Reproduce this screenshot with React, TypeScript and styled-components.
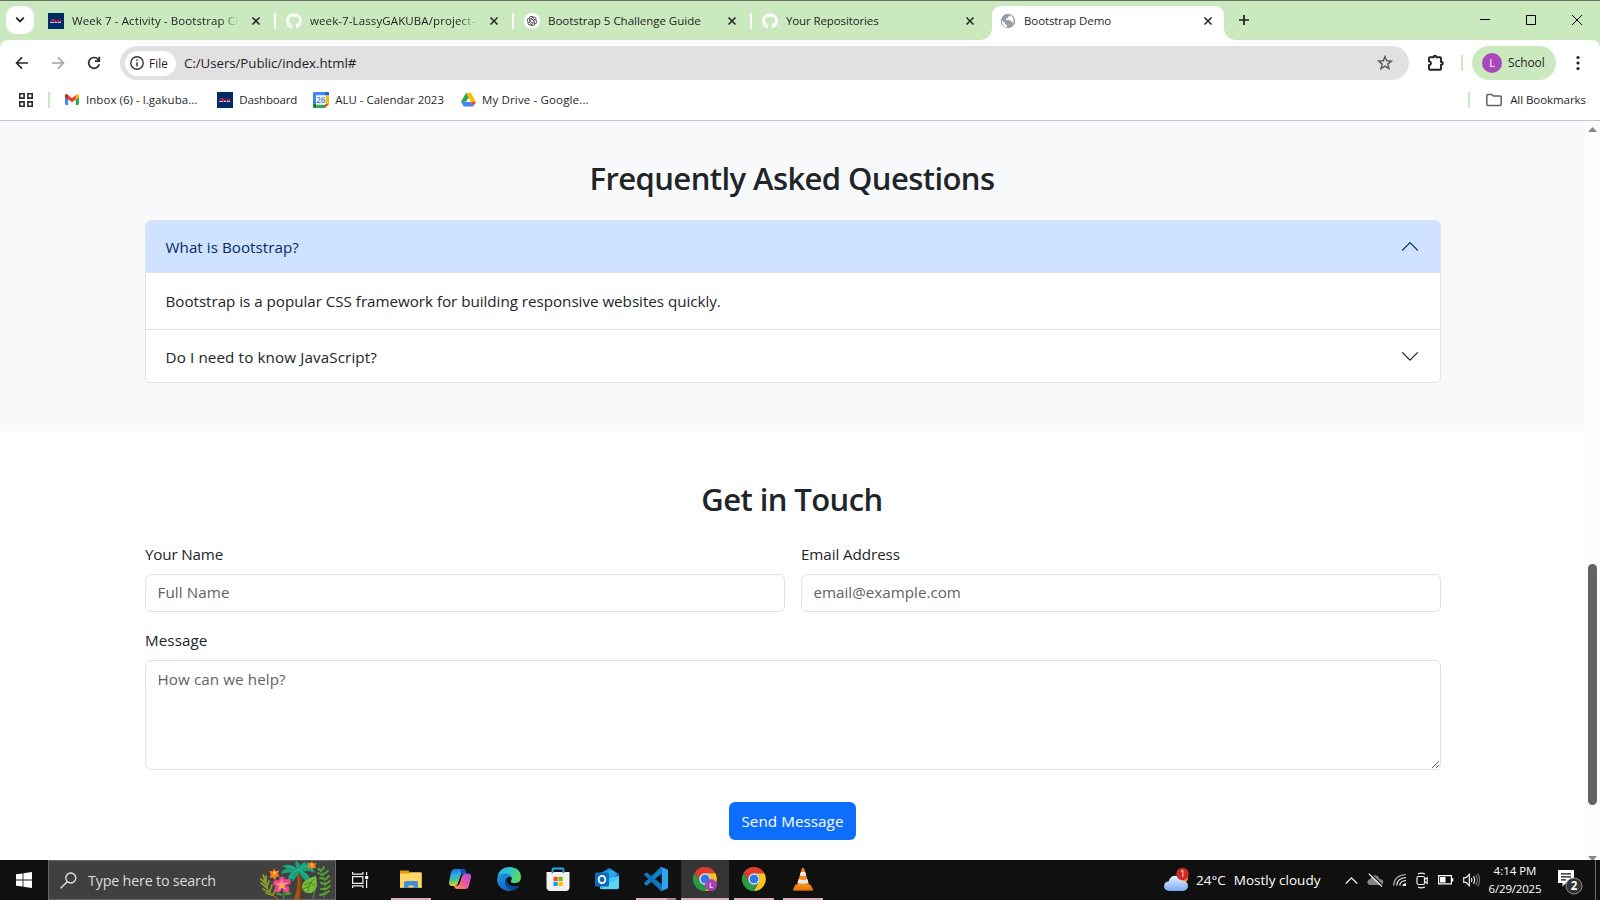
import React from "react";
import styled, { createGlobalStyle, css } from "styled-components";
import { FaGithub } from "react-icons/fa";
import { RiOpenaiFill } from "react-icons/ri";

const GlobalStyle = createGlobalStyle`
  * { box-sizing: border-box; }
  html, body { margin: 0; padding: 0; }
  body { font-family: "Open Sans", "Noto Sans", sans-serif; color: #212529; overflow: hidden; }
  svg { display: block; flex: none; }
`;

const Screen = styled.div`
  width: 1600px;
  height: 900px;
  display: flex;
  flex-direction: column;
  background: #fff;
  overflow: hidden;
`;

const Text = styled.span<{ $size: number; $track?: number; $color?: string; $weight?: number }>`
  font-size: ${(p) => p.$size}px;
  font-weight: ${(p) => p.$weight ?? 400};
  letter-spacing: ${(p) => p.$track ?? 0}px;
  color: ${(p) => p.$color ?? "#1f1f1f"};
  white-space: nowrap;
  line-height: 1.4;
`;

/* ---------- Tab strip ---------- */

const TabStrip = styled.div`
  height: 40px;
  flex: none;
  display: flex;
  align-items: flex-start;
  background: #cbe9bf;
  border-top: 1px solid #646f5f;
  padding: 5px 0 0 6px;
`;

const TabSearch = styled.div`
  width: 28px;
  height: 28px;
  border-radius: 10px;
  background: #fff;
  display: grid;
  place-items: center;
  margin-right: 6px;
`;

const Tab = styled.div<{ $active?: boolean }>`
  position: relative;
  width: ${(p) => (p.$active ? 232 : 238)}px;
  height: 34px;
  display: flex;
  align-items: center;
  padding: 0 ${(p) => (p.$active ? 10 : 2.5)}px 5px 8px;
  border-radius: 9px 9px 0 0;
  background: ${(p) => (p.$active ? "#fff" : "transparent")};
  ${(p) =>
    p.$active &&
    css`
      &::before,
      &::after {
        content: "";
        position: absolute;
        bottom: 0;
        width: 11px;
        height: 11px;
      }
      &::before {
        left: -11px;
        background: radial-gradient(circle at 0 0, transparent 10.5px, #fff 11px);
      }
      &::after {
        right: -11px;
        background: radial-gradient(circle at 100% 0, transparent 10.5px, #fff 11px);
      }
    `}
`;

const TabTitle = styled.div<{ $fade?: boolean }>`
  flex: 1;
  min-width: 0;
  margin: 0 9px 0 8px;
  padding-top: 1px;
  overflow: hidden;
  white-space: nowrap;
  display: flex;
  ${(p) => p.$fade && "mask-image: linear-gradient(90deg, #000 88%, transparent 99%);"}
`;

const TabDivider = styled.div<{ $clear?: boolean }>`
  width: 2px;
  height: 16px;
  background: ${(p) => (p.$clear ? "transparent" : "#fff")};
  margin-left: 12px;
`;

const NewTab = styled.div`
  padding: 8px 0 0 14px;
`;

const WindowButtons = styled.div`
  margin-left: auto;
  display: flex;
  gap: 34px;
  padding: 8px 17px 0 0;
`;

/* ---------- Toolbar ---------- */

const ToolbarBack = styled.div`
  background: linear-gradient(#cbe9bf 0 10px, #fff 10px);
  flex: none;
`;

const Toolbar = styled.div`
  height: 46px;
  display: flex;
  align-items: center;
  background: #fff;
  border-radius: 8px 8px 0 0;
  padding: 0 20px 0 14px;
`;

const NavButtons = styled.div`
  display: flex;
  gap: 20px;
  width: 106px;
`;

const AddressBar = styled.div`
  width: 1289px;
  height: 34px;
  border-radius: 17px;
  background: #e1e1e1;
  display: flex;
  align-items: center;
  padding: 0 16px 0 5px;
`;

const FileChip = styled.div`
  width: 51px;
  height: 25px;
  border-radius: 13px;
  background: #fff;
  display: flex;
  align-items: center;
  gap: 5px;
  padding-left: 5px;
  margin-right: 8px;
`;

const StarSlot = styled.div`
  margin-left: auto;
`;

const PuzzleSlot = styled.div`
  margin: 0 16px 0 17px;
`;

const GreenDivider = styled.div`
  width: 2px;
  height: 16px;
  background: #cbe9bf;
`;

const Profile = styled.div`
  width: 84px;
  height: 34px;
  border-radius: 17px;
  background: #cbe9bf;
  display: flex;
  align-items: center;
  gap: 6px;
  padding-left: 10px;
  margin: 0 auto 0 9px;
`;

const Avatar = styled.div`
  width: 20px;
  height: 20px;
  border-radius: 50%;
  background: #ab47bc;
  color: #fff;
  font-size: 11px;
  line-height: 20px;
  text-align: center;
`;

const BookmarkBar = styled.div`
  height: 35px;
  flex: none;
  display: flex;
  align-items: center;
  background: #fff;
  border-bottom: 1px solid #c9c9c9;
  padding: 0 14px 7px 19px;
`;

const Bookmark = styled.div<{ $gap: number; $left: number }>`
  display: flex;
  align-items: center;
  gap: ${(p) => p.$gap}px;
  margin-left: ${(p) => p.$left}px;
  ${Text} {
    padding-top: 1px;
  }
`;

const BookmarksRight = styled.div`
  margin-left: auto;
  display: flex;
  align-items: center;
`;

/* ---------- Page ---------- */

const Viewport = styled.div`
  height: 739px;
  flex: none;
  display: flex;
  overflow: hidden;
`;

const Page = styled.main`
  width: 1585px;
  height: 100%;
  overflow: hidden;
`;

const Faq = styled.section`
  height: 310px;
  background: #f8f9fa;
  padding: 38px 144px 0 145px;
`;

const Contact = styled.section`
  padding: 49px 144px 0 145px;
`;

const Heading = styled.h2`
  margin: 0;
  height: 38px;
  line-height: 38px;
  padding-right: 2px;
  text-align: center;
  font-size: 31px;
  font-weight: 600;
  letter-spacing: -0.58px;
  color: #212529;
`;

const Accordion = styled.div`
  margin-top: 23px;
  border: 1px solid #dee2e6;
  border-radius: 6px;
  overflow: hidden;
  background: #fff;
`;

const AccordionHeader = styled.div<{ $open?: boolean }>`
  height: ${(p) => (p.$open ? 52 : 53)}px;
  display: flex;
  align-items: center;
  justify-content: space-between;
  padding: 1px 20px 0 19.5px;
  background: ${(p) => (p.$open ? "#cfe2ff" : "#fff")};
  border-${(p) => (p.$open ? "bottom" : "top")}: 1px solid #dee2e6;
  ${Text} {
    padding-top: 2px;
  }
`;

const AccordionBody = styled.div`
  height: 56px;
  display: flex;
  align-items: center;
  padding: 1px 19.5px 0;
`;

const Form = styled.form`
  display: grid;
  grid-template-columns: 640px 640px;
  column-gap: 16px;
  margin-top: 24px;
`;

const Field = styled.div<{ $wide?: boolean }>`
  grid-column: ${(p) => (p.$wide ? "1 / -1" : "auto")};
  display: flex;
  flex-direction: column;
  height: ${(p) => (p.$wide ? 142 : 86)}px;
`;

const Label = styled.label<{ $track: number }>`
  height: 32px;
  line-height: 24px;
  font-size: 15.2px;
  letter-spacing: ${(p) => p.$track}px;
  color: #212529;
`;

const control = css<{ $track: number }>`
  font-family: inherit;
  font-size: 15.2px;
  letter-spacing: ${(p) => p.$track}px;
  line-height: 24px;
  border: 1px solid #dee2e6;
  border-radius: 6px;
  background: #fff;
  outline: none;
  margin: 0;
  width: 100%;
  &::placeholder {
    color: #5f6266;
    opacity: 1;
  }
`;

const Input = styled.input<{ $track: number }>`
  ${control}
  height: 38px;
  padding: 5px 11.5px 7px;
`;

const TextArea = styled.textarea<{ $track: number }>`
  ${control}
  height: 110px;
  padding: 6px 11.5px;
  resize: vertical;
`;

const SubmitRow = styled.div`
  grid-column: 1 / -1;
  display: flex;
  justify-content: center;
  padding: 32px 1px 0 0;
`;

const SubmitButton = styled.button`
  width: 127px;
  height: 38px;
  border: 0;
  border-radius: 6px;
  background: #0d6efd;
  color: #fff;
  font-family: inherit;
  font-size: 15.2px;
  letter-spacing: 0.06px;
  white-space: nowrap;
  padding: 0;
`;

const ScrollTrack = styled.div`
  width: 15px;
  height: 739px;
  background: #fcfcfc;
  display: flex;
  flex-direction: column;
  align-items: center;
  justify-content: space-between;
  padding: 6px 0 0;
`;

const ScrollThumb = styled.div`
  width: 9px;
  height: 241px;
  border-radius: 5px;
  background: #636363;
  margin-top: 381px;
`;

/* ---------- Taskbar ---------- */

const Taskbar = styled.footer`
  height: 40px;
  flex: none;
  display: flex;
  background: #101010;
`;

const StartButton = styled.div`
  width: 48px;
  display: grid;
  place-items: center;
`;

const SearchBox = styled.div`
  width: 288px;
  border: 1px solid #666;
  background: #404040;
  display: flex;
  align-items: center;
  padding-left: 11px;
`;

const SearchLabel = styled.div`
  width: 172px;
  margin-left: 11px;
  padding-top: 2px;
  display: flex;
`;

const TaskView = styled.div`
  width: 55px;
  display: flex;
  align-items: center;
  padding-left: 16px;
`;

const TaskButton = styled.div<{ $running?: boolean; $focused?: boolean; $stacked?: boolean }>`
  width: ${(p) => (p.$focused ? 48 : 40)}px;
  margin: 0 ${(p) => (p.$focused ? 5 : 9)}px 0 ${(p) => (p.$focused ? -4 : 0)}px;
  display: grid;
  place-items: center;
  background: ${(p) => (p.$focused ? "#353535" : "transparent")};
  border-bottom: 2px solid ${(p) => (p.$running ? "#dcb0b5" : "transparent")};
  ${(p) =>
    p.$stacked &&
    css`
      border-image: linear-gradient(90deg, #dcb0b5 31px, #a5868a 31px) 0 0 2 0;
    `}
`;

const Tray = styled.div`
  margin-left: auto;
  display: flex;
  align-items: center;
`;

const Weather = styled.div`
  display: flex;
  align-items: center;
  width: 181px;
`;

const TrayIcons = styled.div`
  display: flex;
  align-items: center;
  width: 143px;
  justify-content: space-between;
  padding-right: 8px;
`;

const Clock = styled.div`
  width: 54px;
  display: flex;
  flex-direction: column;
  align-items: center;
  gap: 2px;
`;

const Notifications = styled.div`
  width: 53px;
  padding: 4px 0 0 16px;
`;

const ShowDesktop = styled.div`
  width: 5px;
  height: 40px;
  border-left: 1px solid #6b6b6b;
`;

/* ---------- Icons ---------- */

const AluIcon = () => (
  <svg width="16" height="16" viewBox="0 0 16 16">
    <rect width="16" height="16" fill="#002b67" />
    <g fill="none">
      <path d="M2.6 8.6 4.700 6.500h.8v2.200M7 6.400v2.200h1.800M10 6.400v2.200h2.600V6.400" stroke="#d8274b" strokeWidth="1.100" />
      <path d="M2.200 9.500h3.600M6.600 9.500h2.500M9.900 9.500h3" stroke="#e9e4ef" strokeWidth=".9" />
    </g>
  </svg>
);

const CloseIcon = () => (
  <svg width="12" height="12" viewBox="0 0 12 12">
    <path d="m2.500 2.500 7 7m0-7-7 7" stroke="#2b2f2a" strokeWidth="1.700" />
  </svg>
);

const OpenAiBadge = styled.div`
  width: 16px;
  height: 16px;
  border-radius: 50%;
  background: #fff;
  display: grid;
  place-items: center;
  color: #222;
`;

const GlobeIcon = () => (
  <svg width="16" height="16" viewBox="0 0 16 16">
    <circle cx="8" cy="8" r="7.200" fill="#989ea5" />
    <path
      d="M2 7.200 5 9.900v1l2.100 1.500v1.900C4.200 14 2 11.500 2 8.200zM10 2c0 1-.5 1.500-1.700 1.600L8 5l-1.900.6v1.300h3.700l1 1.700h1.500c.8 1.200.1 2.200-.7 3.100 1.600-1.200 2.200-2.500 2.100-4.100C13.500 5 12 3 10 2z"
      fill="#fff"
    />
  </svg>
);

const BackIcon = ({ dim, flip }: { dim?: boolean; flip?: boolean }) => (
  <svg width="16" height="16" viewBox="0 0 16 16">
    <g transform={flip ? "translate(16 0) scale(-1 1)" : undefined}>
      <path d="M14 8H3M8 2.300 2.500 8 8 13.700" fill="none" stroke={dim ? "#a3a3a3" : "#2a2a2a"} strokeWidth="1.700" />
    </g>
  </svg>
);

const ReloadIcon = () => (
  <svg width="16" height="16" viewBox="0 0 16 16">
    <path d="M13.300 9.300A5.400 5.400 0 1 1 12 4.200l1.300 1.400" fill="none" stroke="#2a2a2a" strokeWidth="1.700" />
    <path d="M13.300 1.800v4.300H9" fill="none" stroke="#2a2a2a" strokeWidth="1.700" />
  </svg>
);

const InfoIcon = () => (
  <svg width="14" height="14" viewBox="0 0 14 14">
    <circle cx="7" cy="7" r="6.200" fill="none" stroke="#333" strokeWidth="1.400" />
    <path d="M7 6.200v4.200M7 3.500v1.500" stroke="#333" strokeWidth="1.500" />
  </svg>
);

const StarIcon = () => (
  <svg width="16" height="16" viewBox="0 0 16 16">
    <path
      d="m8 1.500 1.700 4.300 4.700.3-3.600 3 1.200 4.500L8 11.100l-4 2.500 1.200-4.500-3.600-3 4.700-.3z"
      fill="none"
      stroke="#5a5a5a"
      strokeWidth="1.400"
    />
  </svg>
);

const PuzzleIcon = () => (
  <svg width="19" height="18" viewBox="0 0 19 18">
    <path
      d="M3 4.200q0-1 1-1h3.600q.1-1.400 1.400-1.400t1.400 1.400h3.600q1 0 1 1v3.600q1.800.1 1.800 1.500T15 10.800v4q0 1-1 1H4q-1 0-1-1v-3.600q2-.4 2-2t-2-2z"
      fill="none"
      stroke="#222"
      strokeWidth="1.900"
    />
  </svg>
);

const DotsIcon = () => (
  <svg width="4" height="16" viewBox="0 0 4 16" fill="#222">
    <circle cx="2" cy="2.500" r="1.600" />
    <circle cx="2" cy="8" r="1.600" />
    <circle cx="2" cy="13.500" r="1.600" />
  </svg>
);

const GridIcon = () => (
  <svg width="14" height="14" viewBox="0 0 14 14" fill="none" stroke="#2a2a2a" strokeWidth="1.600">
    <path d="M.8.8h4.300v4.300H.8zM8.900.8h4.300v4.300H8.900zM.8 8.900h4.300v4.300H.8zM8.900 8.900h4.300v4.300H8.900z" />
  </svg>
);

const GmailIcon = () => (
  <svg width="14" height="11" viewBox="0 0 14 11">
    <path d="M0 2.500 3.200 4.800V11H1Q0 11 0 10z" fill="#4285f4" />
    <path d="M14 2.500 10.800 4.800V11H13q1 0 1-1z" fill="#34a853" />
    <path d="m10.800 1 .7-.6Q14-.6 14 2v1l-3.200 2.400z" fill="#fbbc04" />
    <path d="M3.200 1 7 3.900 10.800 1v4.400L7 8.200 3.200 5.400z" fill="#ea4335" />
    <path d="M3.200 1 2.500.4Q0-.6 0 2v1l3.200 2.400z" fill="#c5221f" />
  </svg>
);

const CalendarIcon = () => (
  <svg width="16" height="16" viewBox="0 0 16 16">
    <path d="M0 1q0-1 1-1h11v3.500H3.500V12H0z" fill="#4285f4" />
    <path d="M12 0h3q1 0 1 1v2.500h-4z" fill="#1967d2" />
    <path d="M12.500 3.500H16V12h-3.500z" fill="#fbbc04" />
    <path d="M3.500 12.500H12V16H3.500z" fill="#34a853" />
    <path d="M0 12h3.500v4H1q-1 0-1-1z" fill="#188038" />
    <path d="M12 12h4l-4 4z" fill="#ea4335" />
    <path d="M3 3.500h9.500v9H3z" fill="#fff" />
    <text x="7.800" y="11" fontSize="8" fontWeight="600" fill="#2f76e8" textAnchor="middle" fontFamily="Open Sans">
      26
    </text>
  </svg>
);

const DriveIcon = () => (
  <svg width="15" height="14" viewBox="0 0 15 14">
    <path d="M5 0h2.500L10 4.500 5 8.700.3 8.900 0 8.500z" fill="#34a853" />
    <path d="M5 0h5l5 8.900h-5z" fill="#fbbc04" />
    <path d="M0 9h5L2.800 13.600z" fill="#4285f4" />
    <path d="M10 9h5l-2.700 4.600z" fill="#ea4335" />
    <path d="M7.500 4.700 10 9H5z" fill="#fff" />
    <path d="M4.500 9H10l2.300 4.600H2.700z" fill="#4285f4" />
  </svg>
);

const FolderIcon = () => (
  <svg width="16" height="14" viewBox="0 0 16 14">
    <path
      d="M.8 2.500q0-1 1-1h4l1.600 1.600h6.800q1 0 1 1v7.400q0 1-1 1H1.800q-1 0-1-1z"
      fill="none"
      stroke="#5f5f5f"
      strokeWidth="1.500"
    />
  </svg>
);

const AccordionChevron = ({ open }: { open?: boolean }) => (
  <svg width="20" height="20" viewBox="0 0 16 16">
    <path
      d={open ? "m2 10.500 6-6 6 6" : "m2 4.500 6 6 6-6"}
      fill="none"
      stroke={open ? "#052c65" : "#212529"}
      strokeWidth="1.050"
      strokeLinecap="round"
      strokeLinejoin="round"
    />
  </svg>
);

const WindowsLogo = () => (
  <svg width="16" height="16" viewBox="0 0 16 16" fill="#fff">
    <path d="M0 2.300 6.600 1.400v6.200H0zM7.400 1.300 16 0v7.600H7.400zM0 8.400h6.600v6.200L0 13.700zM7.400 8.400H16V16l-8.600-1.200z" />
  </svg>
);

const SearchIcon = () => (
  <svg width="17" height="17" viewBox="0 0 17 17" fill="none" stroke="#e8e8e8" strokeWidth="1.300">
    <circle cx="10.800" cy="6" r="5" />
    <path d="M7.200 9.700.7 16.200" />
  </svg>
);

const PlantsArt = () => (
  <svg width="74" height="38" viewBox="0 0 74 38">
    <path d="M4 15q0 14 14 23" fill="none" stroke="#7d6a1e" strokeWidth="1.500" />
    <path
      d="M3 14l2 5M1 18l5 5M1 22l6 5M3 28l6 3M6 32l6 2M6 15l0 6M9 20l-2 6M12 24l-2 6M15 29l-2 5"
      stroke="#8a9a2c"
      strokeWidth="1.800"
      strokeLinecap="round"
    />
    <path d="M34 38q5-12 3-25h3q3 12 0 25z" fill="#a8550c" />
    <path d="M39 13q2 10 0 25h2q1-14-1-25z" fill="#7b3c08" />
    <g fill="#17a17c">
      <path d="M38 10q-6-9-16-5 4 1 5 3-5 0-6 5 8-3 16 0z" />
      <path d="M38 10q4-10 15-7-4 2-4 3 5 1 6 6-7-4-16 0z" />
      <path d="M38 9q-4-5-2-9 4 2 4 5 2-4 6-4-2 6-6 9z" />
      <path d="M39 9q-12 1-11 12 2-3 4-3l0 3q4-4 8-11z" />
      <path d="M38 9q12 2 13 12-2-3-4-3l0 3Q41 17 38 9z" />
    </g>
    <path d="M38 9Q32 4 26 6M38 9q6-5 11-4M38 9q-7 2-8 8M39 9q7 3 9 8" fill="none" stroke="#2fb98d" strokeWidth="1" />
    <path d="M23 26q2 8 0 12" fill="none" stroke="#3d8b2c" strokeWidth="1.500" />
    <path d="M15 32q5-1 8 2-4 2-8-2zM24 33q4-4 8-1-4 4-8 1z" fill="#4b9a2f" />
    <g fill="#ee4488">
      <ellipse cx="22" cy="19.500" rx="3" ry="4" />
      <ellipse cx="17" cy="22" rx="4" ry="3" />
      <ellipse cx="27" cy="21" rx="4" ry="3" />
      <ellipse cx="18" cy="28" rx="3.300" ry="3.500" />
      <ellipse cx="26" cy="28" rx="3.300" ry="3.500" />
    </g>
    <path d="m22 17 1 5 6-1-5 4 3 4-5-2-4 3 1-5-4-3 5 0z" fill="#f887b0" />
    <circle cx="22" cy="24.500" r="2.500" fill="#f8b32f" />
    <path d="M53 38q1-8 4-15" fill="none" stroke="#3d8b2c" strokeWidth="1.500" />
    <path d="M56 15q-15 4-14 12 2 6 9 5 8-3 5-17z" fill="#79ba3b" />
    <path d="M54 18q-6 5-6 13M52 21l-8 3M50 25l-7 3M51 22l4 3" fill="none" stroke="#3d8b2c" strokeWidth="1" />
    <path d="M59 6q9 14 5 31" fill="none" stroke="#3d8b2c" strokeWidth="1.200" />
    <path
      d="M61 10l-3-2M62 14l-4-2M64 18l-4-1M65 23l-4-1M65 28l-4 0M64 33l-4 1M62 9l2-3M64 13l4-3M66 18l3-3M66 23l4-3M66 28l4-3M65 33l4-3"
      stroke="#55a532"
      strokeWidth="1.900"
      strokeLinecap="round"
    />
    <path
      d="m14 7 1.500 3.200 3.800-1-1.500 3.300 2 3-3.500.3-1 3.500-2.500-2.800-3.600.3 1.600-3L9.300 10l3.500.2z"
      fill="#f58220"
    />
    <circle cx="14.500" cy="12" r="1.400" fill="#ffc15a" />
    <path d="m52 0 1.300 2.500 3.200-.4-1.300 2.500 1.200 2.700-3-.2L51.500 9l-1.300-2.500-3 .2 1.300-2.500-1-2.600 3 .4z" fill="#f58220" />
    <circle cx="52" cy="4" r="1.200" fill="#ffc15a" />
  </svg>
);

const TaskViewIcon = () => (
  <svg width="17" height="17" viewBox="0 0 17 17" fill="none" stroke="#f0f0f0" strokeWidth="1.200">
    <path d="M.6 4.600h10.300v6.800H.6zM.6 0v2.200h10.300V0M.6 16v-2.200h10.300V16M14.600 0v3.200M14.600 7.500V16" />
    <path d="M13.200 4h3v3h-3z" fill="#fff" stroke="none" />
  </svg>
);

const ExplorerIcon = () => (
  <svg width="24" height="24" viewBox="0 0 24 24">
    <path d="M1 3.500h8.500l1.500 2V9H1z" fill="#e0980c" />
    <path d="M1 6.500h9l1.500-1.300H22q.8 0 .8.800v14q0 .8-.8.800H1z" fill="#ffd664" />
    <path d="M5 21v-5.300q0-1.700 1.700-1.700h10.600q1.700 0 1.700 1.700V21h-4.500v-2.500h-5V21z" fill="#3f8fd8" />
    <path d="M1 20h4v1H1zM19 20h3.800v1H19z" fill="#f0b93a" />
  </svg>
);

const CopilotIcon = () => (
  <svg width="24" height="24" viewBox="0 0 24 24">
    <defs>
      <linearGradient id="cpA" x1="0" y1="0" x2="0.200" y2="1">
        <stop offset="0" stopColor="#1764d8" />
        <stop offset=".4" stopColor="#28aee8" />
        <stop offset=".7" stopColor="#4dc28a" />
        <stop offset="1" stopColor="#f4cf1d" />
      </linearGradient>
      <linearGradient id="cpB" x1="1" y1="0" x2="0" y2="1">
        <stop offset="0" stopColor="#a44be8" />
        <stop offset=".5" stopColor="#f0569a" />
        <stop offset="1" stopColor="#fb9a4b" />
      </linearGradient>
    </defs>
    <path
      d="M6.500 2H15q2 0 2.600 2l.7 2.500h-3q-2 0-2.700 2L10 16q-1 3-3.500 3H4q-3.500 0-3-4L3 5.500Q3.700 2 6.500 2z"
      fill="url(#cpA)"
    />
    <path
      d="M17.500 22H9q-2 0-2.600-2l-.4-1.300h2.800q2 0 2.700-2L14 9q1-2.500 3.500-2.500H20q3.500 0 3 4L21 18.500q-.7 3.500-3.500 3.500z"
      fill="url(#cpB)"
    />
    <path d="M12.500 2H15q2 0 2.600 2l.7 2.500h-3q-1.500 0-2.300 1.200z" fill="#1b50b8" />
  </svg>
);

const EdgeIcon = () => (
  <svg width="24" height="24" viewBox="0 0 24 24">
    <defs>
      <linearGradient id="edA" x1="0" y1="0.300" x2="1" y2="0.500">
        <stop offset="0" stopColor="#2ab3ee" />
        <stop offset=".5" stopColor="#30c6c8" />
        <stop offset="1" stopColor="#5fdc52" />
      </linearGradient>
      <linearGradient id="edB" x1="0" y1="0" x2="0.500" y2="1">
        <stop offset="0" stopColor="#1e9be6" />
        <stop offset="1" stopColor="#1464c4" />
      </linearGradient>
    </defs>
    <path
      d="M.3 10.500Q2 0 12.500 0 24 .8 24 10.500q-.3 5.500-6.300 5.600-4.500 0-3.800-2.100 1.800-2.300-.2-4.700Q11 6.800 6.500 7.300 2 8 .3 10.500z"
      fill="url(#edA)"
    />
    <path
      d="M.2 11.500Q2 6 8 6.200q4.500.3 6.200 3.800-2.700-1-4.700 1.500-1.700 2.800-.5 6.500 1.300 4 5.500 5.700Q8.500 25 4 21-.5 17 .2 11.500z"
      fill="url(#edB)"
    />
    <path
      d="M9.200 12Q7 14.500 8.500 18.500q2 4.500 6.500 5.200 4.500-.8 7.300-4.700.5-1-.6-.6-4.500 2-8.700-.2Q9.500 16 9.200 12z"
      fill="#0d4a94"
    />
  </svg>
);

const StoreIcon = () => (
  <svg width="24" height="24" viewBox="0 0 24 24">
    <path d="M6.500 6V2.500q0-1 1-1h9q1 0 1 1V6" fill="none" stroke="#28a8ea" strokeWidth="1.800" />
    <path d="M.5 5h23V20q0 4-4 4h-15q-4 0-4-4z" fill="#f1f1f1" />
    <path d="M6.500 4.500V6M17.500 4.500V6" stroke="#1c7fc0" strokeWidth="1.800" />
    <path d="M7.500 9.800h4.200V14H7.500z" fill="#f25022" />
    <path d="M12.500 9.800h4.200V14h-4.200z" fill="#7fba00" />
    <path d="M7.500 14.800h4.200V19H7.500z" fill="#00a4ef" />
    <path d="M12.500 14.800h4.200V19h-4.200z" fill="#ffb900" />
  </svg>
);

const OutlookIcon = () => (
  <svg width="24" height="24" viewBox="0 0 24 24">
    <path d="M4 7.500 13.500 1.300q.8-.5 1.600 0L24 7v5H4z" fill="#1a7fd0" />
    <path d="M6 5.500 17 3l5 4-8 8-8-3z" fill="#28a8e8" />
    <path d="M14 13 24 7v7l-6 2z" fill="#0f4f96" />
    <path d="M5 21.500V14l19-5.500V20q0 2-2 2H7q-2 0-2-.5z" fill="#42c4f4" />
    <path d="M5 22 24 11v9.500q0 1.700-2 1.700H7z" fill="#6fdcf9" opacity=".6" />
    <rect y="5.500" width="14" height="14" rx="1.500" fill="#0f6cbd" />
    <ellipse cx="7" cy="12.500" rx="3.300" ry="3.700" fill="none" stroke="#fff" strokeWidth="1.800" />
  </svg>
);

const VsCodeIcon = () => (
  <svg width="24" height="24" viewBox="0 0 24 24">
    <path d="M17.800 0v6.500L3.200 18.300q-.7.500-1.400 0L.4 17q-.6-.7 0-1.300L16.500.6z" fill="#1080cc" />
    <path d="M17.800 24v-6.500L3.200 5.700q-.7-.5-1.400 0L.4 7q-.6.700 0 1.300l16.100 15.100z" fill="#0f75bd" />
    <path
      d="M17.500 0 24 2.800v18.400L17.500 24q-1 0-1.200-.8 1.500.3 1.500-1.200V2q0-1.500-1.500-1.200.2-.8 1.200-.8z"
      fill="#2fa3ee"
    />
  </svg>
);

const ChromeIcon = ({ badge }: { badge?: boolean }) => (
  <svg width="24" height="24" viewBox="0 0 48 48">
    <path d="M3.200 12 14.500 29.500A11 11 0 0 1 24 12.500h20.800A24 24 0 0 0 3.200 12z" fill="#e33b2e" />
    <path d="M44.800 12.500H24a11 11 0 0 1 9.500 17L24 48a24 24 0 0 0 20.800-35.500z" fill="#fcc31e" />
    <path d="M24 48 33.500 29.500a11 11 0 0 1-19 0L3.200 12A24 24 0 0 0 24 48z" fill="#2a9a47" />
    <circle cx="24" cy="24" r="11.500" fill="#fff" />
    <circle cx="24" cy="24" r="9" fill="#2f78ec" />
    {badge && (
      <>
        <circle cx="36" cy="36" r="12" fill="#a644b8" />
        <text x="36" y="41" fontSize="13" fontWeight="600" fill="#fff" textAnchor="middle">
          L
        </text>
      </>
    )}
  </svg>
);

const VlcIcon = () => (
  <svg width="24" height="24" viewBox="0 0 24 24">
    <path d="m4.500 17.500-2.500 5q-.3 1 .7 1h18.600q1 0 .7-1l-2.500-5z" fill="#f0800f" />
    <path d="M2 22.500h20l.2 1H2z" fill="#c95f05" />
    <path d="M10.900 1.500q1.100-1.500 2.200 0L18.300 18.500q-6.300 3.500-12.600 0z" fill="#f48a1a" />
    <path d="M9.800 5h4.400l1 3.500q-3.200 1.200-6.400 0zM7.700 12q4.300 1.800 8.600 0l1.100 3.700q-5.400 2.300-10.800 0z" fill="#e6e8ea" />
  </svg>
);

const WeatherIcon = () => (
  <svg width="26" height="26" viewBox="0 0 26 26">
    <defs>
      <linearGradient id="cloud" x1="0" y1="0" x2="0" y2="1">
        <stop offset="0" stopColor="#e8f2ff" />
        <stop offset="1" stopColor="#7eaaf0" />
      </linearGradient>
    </defs>
    <circle cx="19.500" cy="11" r="4.500" fill="#f59a23" />
    <path
      d="M5.500 24Q0 23.500 0 19q.3-4 4.700-4.700Q6 8.700 11.500 8.700q5 .3 6.500 5 6 .3 6 5.300-.5 4.700-5 5z"
      fill="url(#cloud)"
    />
    <circle cx="18.500" cy="7" r="6.200" fill="#cf2a20" />
    <text x="18.500" y="10.200" fontSize="9" fill="#fff" textAnchor="middle">
      1
    </text>
  </svg>
);

const ChevronUpIcon = () => (
  <svg width="13" height="9" viewBox="0 0 13 9">
    <path d="m.8 7.500 5.700-5.700 5.700 5.700" fill="none" stroke="#f0f0f0" strokeWidth="1.300" />
  </svg>
);

const CloudOffIcon = () => (
  <svg width="17" height="14" viewBox="0 0 17 14">
    <path d="M3.500 12Q.3 11.800.3 9q.2-2.600 2.900-2.800Q4.500 2.200 8 2.300q3.600.2 4.300 3.700 4 .3 4 3.200-.2 2.600-3 2.800z" fill="#858585" />
    <path d="m2.800.2 13 12.500" stroke="#101010" strokeWidth="1.500" />
    <path d="m1.800.8 13.200 12.700" stroke="#eee" strokeWidth="1.200" />
  </svg>
);

const WifiIcon = () => (
  <svg width="14" height="14" viewBox="0 0 14 14" fill="none" strokeWidth="1.200">
    <path d="M.7 12.500Q1 2.500 13 1.500" stroke="#b5b5b5" />
    <path d="M3.700 12.500Q4 5.300 13 4.500M6.700 12.500Q7 8 13 7.500" stroke="#eee" />
    <path d="M9.500 13q0-2.500 3.500-2.700V13z" fill="#eee" />
  </svg>
);

const MeetIcon = () => (
  <svg width="13" height="17" viewBox="0 0 13 17" fill="none" stroke="#eee" strokeWidth="1.200">
    <rect x="1" y="4.500" width="7.500" height="8" rx="1.500" />
    <path d="m8.500 7.500 2.700-1.800v5.600L8.500 9.500M2 2q3-1.700 7 0M2 15q3 1.700 7 0" />
  </svg>
);

const BatteryIcon = () => (
  <svg width="16" height="10" viewBox="0 0 16 10">
    <path d="M.6.600h12.800v8.300H.6z" fill="none" stroke="#fff" strokeWidth="1.200" />
    <path d="M2 2h5.500v5.500H2zM14 3h1.300v3.500H14z" fill="#fff" />
  </svg>
);

const SpeakerIcon = () => (
  <svg width="17" height="14" viewBox="0 0 17 14" fill="none" strokeWidth="1.200">
    <path d="M.7 4.700h2.200L6.300 1.500v11L2.900 9.300H.7z" stroke="#eee" />
    <path d="M8.300 5q1.300 2 0 4M10.500 3.300q2.300 3.700 0 7.400" stroke="#eee" />
    <path d="M12.700 1.800q3.400 5.200 0 10.400M14.700.5q3.800 6.500 0 13" stroke="#6f6f6f" />
  </svg>
);

const NotificationIcon = () => (
  <svg width="26" height="26" viewBox="0 0 26 26">
    <path d="M0 1h16v13H8l-3.500 3.500V14H0z" fill="#fff" />
    <path d="M3 4.800h10M3 7.800h10M3 10.800h5" stroke="#101010" strokeWidth="1.200" />
    <circle cx="16" cy="17" r="8" fill="#343434" stroke="#8d8d8d" strokeWidth="1" />
    <text x="16" y="21" fontSize="11.500" fontWeight="700" fill="#fff" textAnchor="middle">
      2
    </text>
  </svg>
);

/* ---------- Screen content ---------- */

const tabs = [
  { icon: <AluIcon />, title: "Week 7 - Activity - Bootstrap Ch", track: 0.1, fade: true },
  { icon: <FaGithub size={16} color="#fff" />, title: "week-7-LassyGAKUBA/project-c", track: 0.11, fade: true },
  {
    icon: (
      <OpenAiBadge>
        <RiOpenaiFill size={12} />
      </OpenAiBadge>
    ),
    title: "Bootstrap 5 Challenge Guide",
    track: -0.02,
  },
  { icon: <FaGithub size={16} color="#fff" />, title: "Your Repositories", track: -0.12, last: true },
];

export default function App() {
  return (
    <>
      <GlobalStyle />
      <Screen>
        <TabStrip>
          <TabSearch>
            <svg width="10" height="8" viewBox="0 0 10 8">
              <path d="m1.200 1.700 3.800 3.800 3.800-3.800" fill="none" stroke="#1f1f1f" strokeWidth="1.800" />
            </svg>
          </TabSearch>
          {tabs.map((tab, i) => (
            <Tab key={i}>
              {tab.icon}
              <TabTitle $fade={tab.fade}>
                <Text $size={11.5} $track={tab.track}>
                  {tab.title}
                </Text>
              </TabTitle>
              <CloseIcon />
              <TabDivider $clear={tab.last} />
            </Tab>
          ))}
          <Tab $active>
            <GlobeIcon />
            <TabTitle>
              <Text $size={11.5} $track={-0.1}>
                Bootstrap Demo
              </Text>
            </TabTitle>
            <CloseIcon />
          </Tab>
          <NewTab>
            <svg width="12" height="12" viewBox="0 0 12 12">
              <path d="M6 1v10M1 6h10" stroke="#1f1f1f" strokeWidth="1.700" />
            </svg>
          </NewTab>
          <WindowButtons>
            <svg width="12" height="12" viewBox="0 0 12 12">
              <path d="M1 5.500h10" stroke="#000" />
            </svg>
            <svg width="12" height="12" viewBox="0 0 12 12">
              <path d="M1.500 1.500h9v9h-9z" fill="none" stroke="#000" />
            </svg>
            <svg width="12" height="12" viewBox="0 0 12 12">
              <path d="m1 1 10 10M11 1 1 11" stroke="#000" />
            </svg>
          </WindowButtons>
        </TabStrip>

        <ToolbarBack>
          <Toolbar>
            <NavButtons>
              <BackIcon />
              <BackIcon dim flip />
              <ReloadIcon />
            </NavButtons>
            <AddressBar>
              <FileChip>
                <InfoIcon />
                <Text $size={11.7} $track={0.1} $weight={500}>
                  File
                </Text>
              </FileChip>
              <Text $size={13.3} $track={-0.06}>
                C:/Users/Public/index.html#
              </Text>
              <StarSlot>
                <StarIcon />
              </StarSlot>
            </AddressBar>
            <PuzzleSlot>
              <PuzzleIcon />
            </PuzzleSlot>
            <GreenDivider />
            <Profile>
              <Avatar>L</Avatar>
              <Text $size={12} $track={-0.1}>
                School
              </Text>
            </Profile>
            <DotsIcon />
          </Toolbar>
        </ToolbarBack>

        <BookmarkBar>
          <GridIcon />
          <Bookmark $gap={15} $left={15}>
            <GreenDivider />
            <GmailIcon />
          </Bookmark>
          <Bookmark $gap={0} $left={7}>
            <Text $size={11.5} $track={0.04}>
              Inbox (6) - l.gakuba...
            </Text>
          </Bookmark>
          <Bookmark $gap={6} $left={20}>
            <AluIcon />
            <Text $size={11.5} $track={-0.17}>
              Dashboard
            </Text>
          </Bookmark>
          <Bookmark $gap={6} $left={16}>
            <CalendarIcon />
            <Text $size={11.5}>ALU - Calendar 2023</Text>
          </Bookmark>
          <Bookmark $gap={6} $left={17}>
            <DriveIcon />
            <Text $size={11.5} $track={0.15}>
              My Drive - Google...
            </Text>
          </Bookmark>
          <BookmarksRight>
            <GreenDivider />
            <Bookmark $gap={8} $left={16}>
              <FolderIcon />
              <Text $size={11.5} $track={-0.06}>
                All Bookmarks
              </Text>
            </Bookmark>
          </BookmarksRight>
        </BookmarkBar>

        <Viewport>
          <Page>
            <Faq>
              <Heading>Frequently Asked Questions</Heading>
              <Accordion>
                <AccordionHeader $open>
                  <Text $size={15.2} $track={0.03} $color="#052c65">
                    What is Bootstrap?
                  </Text>
                  <AccordionChevron open />
                </AccordionHeader>
                <AccordionBody>
                  <Text $size={15.2} $track={-0.028} $color="#212529">
                    Bootstrap is a popular CSS framework for building responsive websites quickly.
                  </Text>
                </AccordionBody>
                <AccordionHeader>
                  <Text $size={15.2} $track={0.12} $color="#212529">
                    Do I need to know JavaScript?
                  </Text>
                  <AccordionChevron />
                </AccordionHeader>
              </Accordion>
            </Faq>
            <Contact>
              <Heading>Get in Touch</Heading>
              <Form>
                <Field>
                  <Label $track={-0.17}>Your Name</Label>
                  <Input $track={0.1} placeholder="Full Name" />
                </Field>
                <Field>
                  <Label $track={-0.08}>Email Address</Label>
                  <Input $track={0} placeholder="email@example.com" />
                </Field>
                <Field $wide>
                  <Label $track={0.08}>Message</Label>
                  <TextArea $track={0.09} placeholder="How can we help?" />
                </Field>
                <SubmitRow>
                  <SubmitButton type="button">Send Message</SubmitButton>
                </SubmitRow>
              </Form>
            </Contact>
          </Page>
          <ScrollTrack>
            <svg width="9" height="5" viewBox="0 0 9 5">
              <path d="M0 5 4.500 0 9 5z" fill="#858585" />
            </svg>
            <ScrollThumb />
            <svg width="9" height="4" viewBox="0 0 9 4">
              <path d="M0 0h9L4.500 5z" fill="#858585" />
            </svg>
          </ScrollTrack>
        </Viewport>

        <Taskbar>
          <StartButton>
            <WindowsLogo />
          </StartButton>
          <SearchBox>
            <SearchIcon />
            <SearchLabel>
              <Text $size={14.3} $track={-0.19} $color="#dcdcdc">
                Type here to search
              </Text>
            </SearchLabel>
            <PlantsArt />
          </SearchBox>
          <TaskView>
            <TaskViewIcon />
          </TaskView>
          <TaskButton $running>
            <ExplorerIcon />
          </TaskButton>
          <TaskButton>
            <CopilotIcon />
          </TaskButton>
          <TaskButton>
            <EdgeIcon />
          </TaskButton>
          <TaskButton>
            <StoreIcon />
          </TaskButton>
          <TaskButton>
            <OutlookIcon />
          </TaskButton>
          <TaskButton $running $stacked>
            <VsCodeIcon />
          </TaskButton>
          <TaskButton $running $focused>
            <ChromeIcon badge />
          </TaskButton>
          <TaskButton $running>
            <ChromeIcon />
          </TaskButton>
          <TaskButton $running>
            <VlcIcon />
          </TaskButton>
          <Tray>
            <Weather>
              <WeatherIcon />
              <Bookmark $gap={8} $left={6}>
                <Text $size={13.5} $color="#fff">
                  24°C
                </Text>
                <Text $size={13.5} $track={0.02} $color="#fff">
                  Mostly cloudy
                </Text>
              </Bookmark>
            </Weather>
            <TrayIcons>
              <ChevronUpIcon />
              <CloudOffIcon />
              <WifiIcon />
              <MeetIcon />
              <BatteryIcon />
              <SpeakerIcon />
            </TrayIcons>
            <Clock>
              <Text $size={11.5} $track={-0.03} $color="#fff">
                4:14 PM
              </Text>
              <Text $size={11.5} $track={-0.185} $color="#fff">
                6/29/2025
              </Text>
            </Clock>
            <Notifications>
              <NotificationIcon />
            </Notifications>
            <ShowDesktop />
          </Tray>
        </Taskbar>
      </Screen>
    </>
  );
}
